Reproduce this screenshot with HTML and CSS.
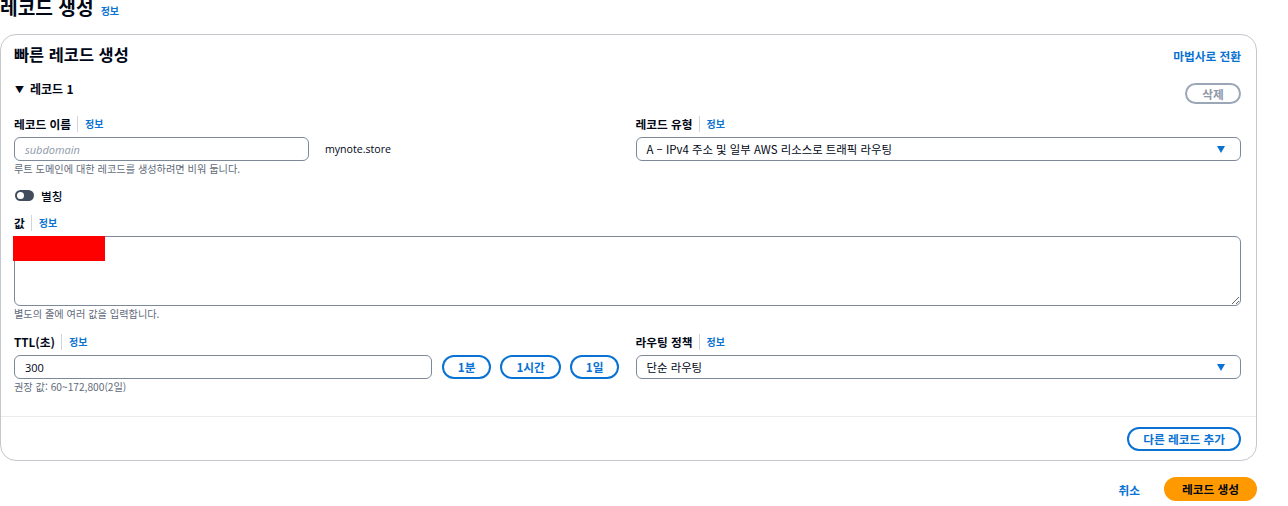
FILE: index.html
```html
<!DOCTYPE html>
<html lang="ko">
<head>
<meta charset="utf-8">
<title>레코드 생성</title>
<link rel="stylesheet" href="styles.css">
</head>
<body>
<div class="page">
  <header class="page-head">
    <h1>레코드 생성</h1>
    <a class="info" href="#">정보</a>
  </header>

  <section class="card">
    <div class="card-head">
      <h2>빠른 레코드 생성</h2>
      <a class="link-strong" href="#">마법사로 전환</a>
    </div>

    <div class="record">
      <div class="record-head">
        <span class="record-title"><span class="caret">▼</span>레코드 1</span>
        <button class="btn btn-disabled" type="button">삭제</button>
      </div>

      <div class="cols row-name">
        <div class="field">
          <div class="label"><span>레코드 이름</span><a class="info" href="#">정보</a></div>
          <div class="name-line">
            <input class="input input-name" type="text" placeholder="subdomain">
            <span class="domain">mynote.store</span>
          </div>
          <div class="hint">루트 도메인에 대한 레코드를 생성하려면 비워 둡니다.</div>
        </div>
        <div class="field">
          <div class="label"><span>레코드 유형</span><a class="info" href="#">정보</a></div>
          <div class="select"><span>A – IPv4 주소 및 일부 AWS 리소스로 트래픽 라우팅</span><span class="tri"></span></div>
        </div>
      </div>

      <div class="toggle-row">
        <span class="toggle"><span class="knob"></span></span>
        <span>별칭</span>
      </div>

      <div class="field row-value">
        <div class="label"><span>값</span><a class="info" href="#">정보</a></div>
        <div class="textarea-wrap">
          <textarea class="textarea"></textarea>
          <div class="redact"></div>
        </div>
        <div class="hint">별도의 줄에 여러 값을 입력합니다.</div>
      </div>

      <div class="cols row-ttl">
        <div class="field">
          <div class="label"><span>TTL(초)</span><a class="info" href="#">정보</a></div>
          <div class="ttl-line">
            <input class="input input-ttl" type="text" value="300">
            <button class="btn btn-normal" type="button">1분</button>
            <button class="btn btn-normal" type="button">1시간</button>
            <button class="btn btn-normal" type="button">1일</button>
          </div>
          <div class="hint">권장 값: 60~172,800(2일)</div>
        </div>
        <div class="field">
          <div class="label"><span>라우팅 정책</span><a class="info" href="#">정보</a></div>
          <div class="select"><span>단순 라우팅</span><span class="tri"></span></div>
        </div>
      </div>
    </div>

    <div class="card-foot">
      <button class="btn btn-normal" type="button">다른 레코드 추가</button>
    </div>
  </section>

  <div class="actions">
    <a class="cancel" href="#">취소</a>
    <button class="btn btn-primary" type="button">레코드 생성</button>
  </div>
</div>
</body>
</html>
```

FILE: styles.css
```css
* { box-sizing: border-box; }

html, body {
  margin: 0;
  padding: 0;
  background: #ffffff;
}

body {
  font-family: "Open Sans", "Noto Sans CJK KR", sans-serif;
  color: #000716;
  font-size: 11px;
}

.page {
  width: 1257px;
  overflow: hidden;
  height: 506px;
}

a { text-decoration: none; }

.page-head {
  display: flex;
  align-items: baseline;
  gap: 7px;
  height: 39px;
  margin-top: -5px;
}

.page-head h1 {
  margin: 0;
  font-size: 19.2px;
  font-weight: 700;
  line-height: 24px;
  font-family: "Noto Sans CJK KR", sans-serif;
}

.info {
  color: #0972d3;
  font-size: 10px;
  font-weight: 700;
  font-family: "Noto Sans CJK KR", sans-serif;
}

.card {
  border: 1px solid #c6c6cd;
  border-radius: 16px;
  background: #fff;
  height: 427px;
  display: flex;
  flex-direction: column;
}

.card-head {
  display: flex;
  align-items: baseline;
  justify-content: space-between;
  padding: 7px 15px 0 13px;
  height: 42px;
}

.card-head h2 {
  margin: 0;
  font-size: 16.4px;
  line-height: 24px;
  font-weight: 700;
  font-family: "Noto Sans CJK KR", sans-serif;
}

.link-strong {
  color: #0972d3;
  font-weight: 700;
  font-size: 11.7px;
  font-family: "Noto Sans CJK KR", sans-serif;
}

.record {
  padding: 0 15px 0 13px;
  flex: 1;
}

.record-head {
  display: flex;
  justify-content: space-between;
  align-items: flex-start;
  height: 38px;
  padding-top: 4px;
}

.record-title {
  font-weight: 700;
  font-size: 12px;
  line-height: 16px;
  font-family: "Noto Sans CJK KR", sans-serif;
}

.caret {
  font-size: 9px;
  margin: 0 6px 0 1px;
  position: relative;
  top: -1px;
}

.btn {
  font-family: "Noto Sans CJK KR", sans-serif;
  font-weight: 700;
  font-size: 11.7px;
  border-radius: 20px;
  background: #fff;
  height: 24px;
  padding: 0 14px;
  line-height: 20px;
  cursor: pointer;
}

.btn-disabled {
  border: 2px solid #9ba7b6;
  color: #8d99a8;
  height: 21px;
  line-height: 17px;
  margin-top: 2px;
  width: 56px;
  padding: 0;
}

.btn-normal {
  border: 2px solid #0972d3;
  color: #0972d3;
}

.btn-primary {
  border: 2px solid #ff9900;
  background: #ff9900;
  color: #000716;
  padding: 0 16px;
}

.cols {
  display: grid;
  grid-template-columns: 1fr 1fr;
  column-gap: 16px;
}

.field {
  display: flex;
  flex-direction: column;
}

.label {
  display: flex;
  align-items: center;
  font-weight: 700;
  font-size: 11.7px;
  line-height: 16px;
  height: 18px;
  margin-bottom: 4px;
  font-family: "Noto Sans CJK KR", sans-serif;
}

.label .info {
  border-left: 1px solid #d1d5db;
  margin-left: 6px;
  padding-left: 7px;
  line-height: 16px;
}

.name-line {
  display: flex;
  align-items: center;
  gap: 16px;
}

.input {
  height: 24px;
  border: 1px solid #7d8998;
  border-radius: 6px;
  padding: 0 10px;
  font-family: "Open Sans", "Noto Sans CJK KR", sans-serif;
  font-size: 11px;
  color: #000716;
  background: #fff;
  outline: none;
}

.input::placeholder {
  color: #8d99a8;
  font-style: italic;
}

.input-name { width: 295px; }

.domain {
  font-size: 10.6px;
  color: #000716;
}

.hint {
  font-size: 10.2px;
  color: #5f6b7a;
  margin-top: 1px;
  line-height: 14px;
  font-family: "Noto Sans CJK KR", sans-serif;
}

.select {
  height: 24px;
  border: 1px solid #7d8998;
  border-radius: 6px;
  padding: 0 15px 0 10px;
  display: flex;
  align-items: center;
  justify-content: space-between;
  font-size: 11.4px;
  font-family: "Noto Sans CJK KR", sans-serif;
}

.tri {
  width: 0;
  height: 0;
  border-left: 4px solid transparent;
  border-right: 4px solid transparent;
  border-top: 7px solid #0972d3;
}

.row-name { height: 70px; }

.toggle-row {
  display: flex;
  align-items: center;
  gap: 7px;
  height: 20px;
  font-weight: 500;
  font-size: 11.7px;
  font-family: "Noto Sans CJK KR", sans-serif;
}

.toggle {
  width: 19px;
  height: 11px;
  border-radius: 6px;
  background: #414d5c;
  position: relative;
  margin-left: 1px;
}

.knob {
  position: absolute;
  left: 2px;
  top: 2px;
  width: 7px;
  height: 7px;
  border-radius: 50%;
  background: #fff;
}

.row-value { margin-top: 9px; }

.textarea-wrap {
  position: relative;
  height: 70px;
}

.textarea {
  width: 100%;
  height: 70px;
  border: 1px solid #7d8998;
  border-radius: 6px;
  resize: vertical;
  display: block;
  outline: none;
}

.redact {
  position: absolute;
  left: -1px;
  top: 0;
  width: 92px;
  height: 25px;
  background: #ff0000;
}

.row-ttl { margin-top: 12px; }

.ttl-line {
  display: flex;
  align-items: center;
  gap: 9px;
}

.input-ttl { width: 418px; margin-right: 1px; }

.ttl-line .btn { padding: 0 14px; }

.card-foot {
  border-top: 1px solid #e9ebed;
  height: 44px;
  display: flex;
  justify-content: flex-end;
  align-items: center;
  padding: 0 15px;
}

.actions {
  display: flex;
  justify-content: flex-end;
  align-items: center;
  gap: 24px;
  margin-top: 16px;
}

.cancel {
  color: #0972d3;
  font-weight: 700;
  font-size: 11.7px;
  font-family: "Noto Sans CJK KR", sans-serif;
}
```
